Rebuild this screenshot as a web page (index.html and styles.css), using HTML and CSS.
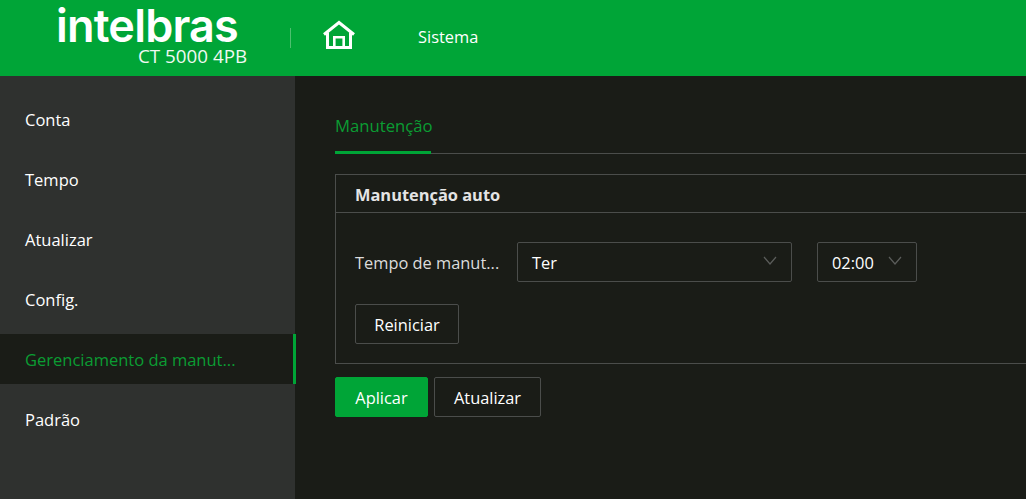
FILE: index.html
```html
<!DOCTYPE html>
<html lang="pt">
<head>
<meta charset="utf-8">
<title>Intelbras CT 5000 4PB</title>
<link rel="stylesheet" href="styles.css">
</head>
<body>
<header class="topbar">
  <div class="brand">
    <div class="logo">intelbras</div>
    <div class="model">CT 5000 4PB</div>
  </div>
  <div class="divider"></div>
  <svg class="home" width="34" height="32" viewBox="0 0 34 32" aria-hidden="true">
    <path d="M2 15.500 L17 3.500 L32 15.500" fill="none" stroke="#fff" stroke-width="3"/>
    <path d="M5.500 13.500 V28.500 H28.500 V13.500" fill="none" stroke="#fff" stroke-width="3"/>
    <path d="M12.300 28 V18.300 H21.700 V28" fill="none" stroke="#fff" stroke-width="2.600"/>
  </svg>
  <nav class="topnav">Sistema</nav>
</header>
<div class="body">
  <aside class="sidebar">
    <div class="item">Conta</div>
    <div class="item">Tempo</div>
    <div class="item">Atualizar</div>
    <div class="item">Config.</div>
    <div class="item active">Gerenciamento da manut...</div>
    <div class="item">Padrão</div>
  </aside>
  <main class="main">
    <div class="tabs"><div class="tab">Manutenção</div></div>
    <section class="panel">
      <h2 class="panel-title">Manutenção auto</h2>
      <div class="panel-body">
        <div class="row">
          <span class="label">Tempo de manut...</span>
          <div class="select wide"><span>Ter</span><svg class="chev" width="14" height="9" viewBox="0 0 14 9"><path d="M1 1 L7 8 L13 1" fill="none" stroke="#5b5d5b" stroke-width="1.200"/></svg></div>
          <div class="select narrow"><span>02:00</span><svg class="chev" width="14" height="9" viewBox="0 0 14 9"><path d="M1 1 L7 8 L13 1" fill="none" stroke="#5b5d5b" stroke-width="1.200"/></svg></div>
        </div>
        <button class="btn restart">Reiniciar</button>
      </div>
    </section>
    <div class="actions">
      <button class="btn primary">Aplicar</button>
      <button class="btn refresh">Atualizar</button>
    </div>
  </main>
</div>
</body>
</html>
```
FILE: styles.css
```css
* { box-sizing: border-box; }
html, body { margin: 0; height: 100%; }
body {
  background: #1a1c17;
  color: #fff;
  font-family: "Open Sans", "Noto Sans", "Liberation Sans", sans-serif;
  font-size: 16px;
  overflow: hidden;
}
.topbar {
  height: 76px;
  background: #00a537;
  display: flex;
  align-items: center;
}
.brand {
  width: 290px;
  height: 76px;
  padding-left: 56px;
}
.logo {
  font-family: "Inter", sans-serif;
  font-weight: 600;
  font-size: 45px;
  line-height: 36px;
  margin-top: 8px;
  letter-spacing: -0.800px;
  white-space: nowrap;
}
.model {
  font-size: 18.800px;
  line-height: 20px;
  margin-left: 82px;
  margin-top: 2px;
  color: #f1f9f3;
  white-space: nowrap;
}
.divider {
  width: 1px;
  height: 20px;
  background: #4dc06f;
}
.home { margin-left: 31px; margin-top: -6px; }
.topnav { margin-left: 62px; font-size: 16.400px; margin-top: -4px; }
.body { display: flex; height: 423px; }
.sidebar {
  width: 295px;
  background: #2f312f;
  padding-top: 18px;
  display: flex;
  flex-direction: column;
  gap: 10px;
  flex: none;
}
.item {
  height: 50px;
  line-height: 51px;
  padding-left: 25px;
  font-size: 16.500px;
  color: #fff;
}
.item.active {
  background: #1a1c17;
  color: #0b9c33;
  width: 296px;
  border-right: 3px solid #00a537;
}
.main {
  flex: 1;
  padding: 0 0 0 40px;
  min-width: 0;
}
.tabs {
  height: 78px;
  border-bottom: 1px solid #4b4d4b;
  display: flex;
  align-items: flex-end;
}
.tab {
  width: 96px;
  height: 54px;
  margin-bottom: -1px;
  line-height: 52px;
  color: #0b9c33;
  font-size: 16.700px;
  border-bottom: 3px solid #00a537;
  white-space: nowrap;
}
.panel {
  margin-top: 20px;
  margin-right: -10px;
  height: 190px;
  border: 1px solid #4b4d4b;
}
.panel-title {
  margin: 0;
  height: 38px;
  line-height: 40px;
  padding-left: 19px;
  font-size: 16.400px;
  font-weight: 700;
  color: #e4e4e4;
  border-bottom: 1px solid #4b4d4b;
}
.panel-body { padding: 29px 0 0 19px; }
.row { display: flex; align-items: center; }
.label { width: 162px; color: #dcdcdc; font-size: 16.400px; white-space: nowrap; }
.select {
  height: 40px;
  border: 1px solid #4b4d4b;
  border-radius: 2px;
  display: flex;
  align-items: center;
  justify-content: space-between;
  padding: 0 14px;
  font-size: 16.400px;
}
.chev { margin-top: -4px; }
.wide { width: 275px; }
.narrow { width: 100px; margin-left: 25px; }
.btn {
  height: 40px;
  border: 1px solid #4b4d4b;
  border-radius: 2px;
  background: transparent;
  color: #fff;
  font-family: inherit;
  font-size: 16.400px;
  padding: 0;
  display: block;
}
.restart { width: 104px; margin-top: 22px; }
.actions { display: flex; gap: 6px; margin-top: 13px; }
.primary { width: 93px; background: #00a537; border-color: #00a537; }
.refresh { width: 107px; }
```
